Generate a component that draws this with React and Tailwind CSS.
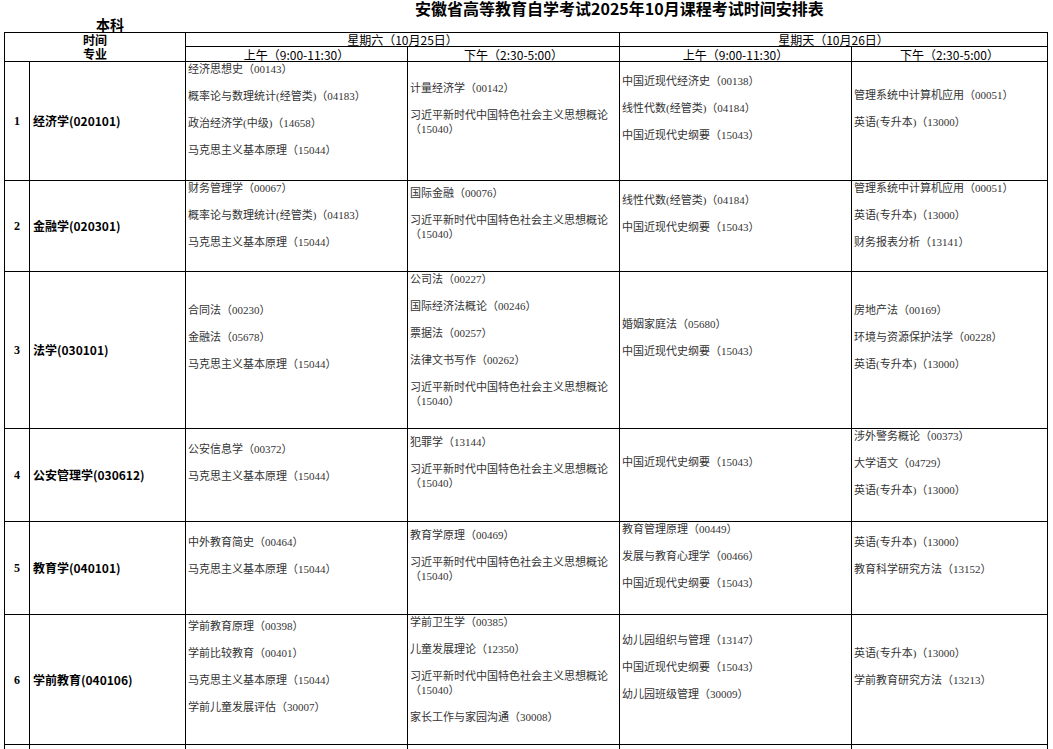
const XI = ["习近平新时代中国特色社会主义思想概论", "（15040）"];
const MKS = "马克思主义基本原理（15044）";
const GS = "中国近现代史纲要（15043）";
const YY = "英语(专升本)（13000）";

const rows = [
  {
    no: "1",
    major: "经济学(020101)",
    h: 119,
    cells: [
      ["经济思想史（00143）", "概率论与数理统计(经管类)（04183）", "政治经济学(中级)（14658）", MKS],
      ["计量经济学（00142）", XI],
      ["中国近现代经济史（00138）", "线性代数(经管类)（04184）", GS],
      ["管理系统中计算机应用（00051）", YY],
    ],
  },
  {
    no: "2",
    major: "金融学(020301)",
    h: 91,
    cells: [
      ["财务管理学（00067）", "概率论与数理统计(经管类)（04183）", MKS],
      ["国际金融（00076）", XI],
      ["线性代数(经管类)（04184）", GS],
      ["管理系统中计算机应用（00051）", YY, "财务报表分析（13141）"],
    ],
  },
  {
    no: "3",
    major: "法学(030101)",
    h: 157,
    cells: [
      ["合同法（00230）", "金融法（05678）", MKS],
      ["公司法（00227）", "国际经济法概论（00246）", "票据法（00257）", "法律文书写作（00262）", XI],
      ["婚姻家庭法（05680）", GS],
      ["房地产法（00169）", "环境与资源保护法学（00228）", YY],
    ],
  },
  {
    no: "4",
    major: "公安管理学(030612)",
    h: 93,
    cells: [
      ["公安信息学（00372）", MKS],
      ["犯罪学（13144）", XI],
      [GS],
      ["涉外警务概论（00373）", "大学语文（04729）", YY],
    ],
  },
  {
    no: "5",
    major: "教育学(040101)",
    h: 93,
    cells: [
      ["中外教育简史（00464）", MKS],
      ["教育学原理（00469）", XI],
      ["教育管理原理（00449）", "发展与教育心理学（00466）", GS],
      [YY, "教育科学研究方法（13152）"],
    ],
  },
  {
    no: "6",
    major: "学前教育(040106)",
    h: 130,
    cells: [
      ["学前教育原理（00398）", "学前比较教育（00401）", MKS, "学前儿童发展评估（30007）"],
      ["学前卫生学（00385）", "儿童发展理论（12350）", XI, "家长工作与家园沟通（30008）"],
      ["幼儿园组织与管理（13147）", GS, "幼儿园班级管理（30009）"],
      [YY, "学前教育研究方法（13213）"],
    ],
  },
];

function Cell({ items, h }) {
  const lines = items.reduce((n, it) => n + (Array.isArray(it) ? it.length : 1), 0);
  const total = (lines + items.length + 1) * 13.5;
  const over = total > h - 1;
  return (
    <div
      className={`border-r border-b border-black pl-[2px] flex flex-col overflow-hidden ${
        over ? "justify-start pt-[1px]" : "justify-center"
      }`}
    >
      <div className="shrink-0 flex flex-col gap-[13.5px] pb-[24px] text-[11px] text-[#333] font-['Liberation_Serif','Noto_Sans_CJK_SC',serif]">
        {items.map((it, i) =>
          Array.isArray(it) ? (
            <div key={i} className="leading-[13.5px] whitespace-nowrap">
              {it.map((l, j) => (
                <div key={j}>{l}</div>
              ))}
            </div>
          ) : (
            <div key={i} className="leading-[13.5px] whitespace-nowrap">
              {it}
            </div>
          )
        )}
      </div>
    </div>
  );
}

function RowCells({ r }) {
  return (
    <>
      <div className="border-r border-b border-black flex items-center justify-center text-[12px] font-bold font-['Liberation_Serif',serif]">
        {r.no}
      </div>
      <div className="border-r border-b border-black flex items-center pl-[3px] text-[12px] font-bold whitespace-nowrap">
        {r.major}
      </div>
      {r.cells.map((items, i) => (
        <Cell key={i} items={items} h={r.h} />
      ))}
    </>
  );
}

export default function App() {
  return (
    <div className="h-[749px] w-[1053px] overflow-hidden bg-white text-black font-['Noto_Sans_CJK_SC',sans-serif]">
      <div className="h-[17px] leading-[17px] pl-[415px] text-[16px] font-bold whitespace-nowrap">
        安徽省高等教育自学考试2025年10月课程考试时间安排表
      </div>
      <div className="h-[15px] leading-[15px] pl-[96px] text-[14px] font-bold">本科</div>
      <div className="ml-[4px] w-[1044px] grid grid-cols-[25px_156px_222px_212px_232px_196px] grid-rows-[14px_15px_119px_91px_157px_93px_93px_130px_10px] border-l border-t border-black">
        <div className="col-span-2 row-span-2 border-r border-b border-black flex flex-col items-center justify-center text-[12px] font-bold leading-[14px]">
          <div>时间</div>
          <div>专业</div>
        </div>
        <div className="col-span-2 border-r border-b border-black flex items-center justify-center text-[12px] leading-[13px] whitespace-nowrap">
          星期六（10月25日）
        </div>
        <div className="col-span-2 border-r border-b border-black flex items-center justify-center text-[12px] leading-[13px] whitespace-nowrap">
          星期天（10月26日）
        </div>
        <div className="border-r border-b border-black flex items-center justify-center text-[12px] leading-[13px] whitespace-nowrap">
          上午（9:00-11:30）
        </div>
        <div className="border-r border-b border-black flex items-center justify-center text-[12px] leading-[13px] whitespace-nowrap">
          下午（2:30-5:00）
        </div>
        <div className="border-r border-b border-black flex items-center justify-center text-[12px] leading-[13px] whitespace-nowrap">
          上午（9:00-11:30）
        </div>
        <div className="border-r border-b border-black flex items-center justify-center text-[12px] leading-[13px] whitespace-nowrap">
          下午（2:30-5:00）
        </div>
        {rows.map((r) => (
          <RowCells key={r.no} r={r} />
        ))}
        <div className="border-r border-b border-black" />
        <div className="border-r border-b border-black" />
        <div className="border-r border-b border-black" />
        <div className="border-r border-b border-black" />
        <div className="border-r border-b border-black" />
        <div className="border-r border-b border-black" />
      </div>
    </div>
  );
}
